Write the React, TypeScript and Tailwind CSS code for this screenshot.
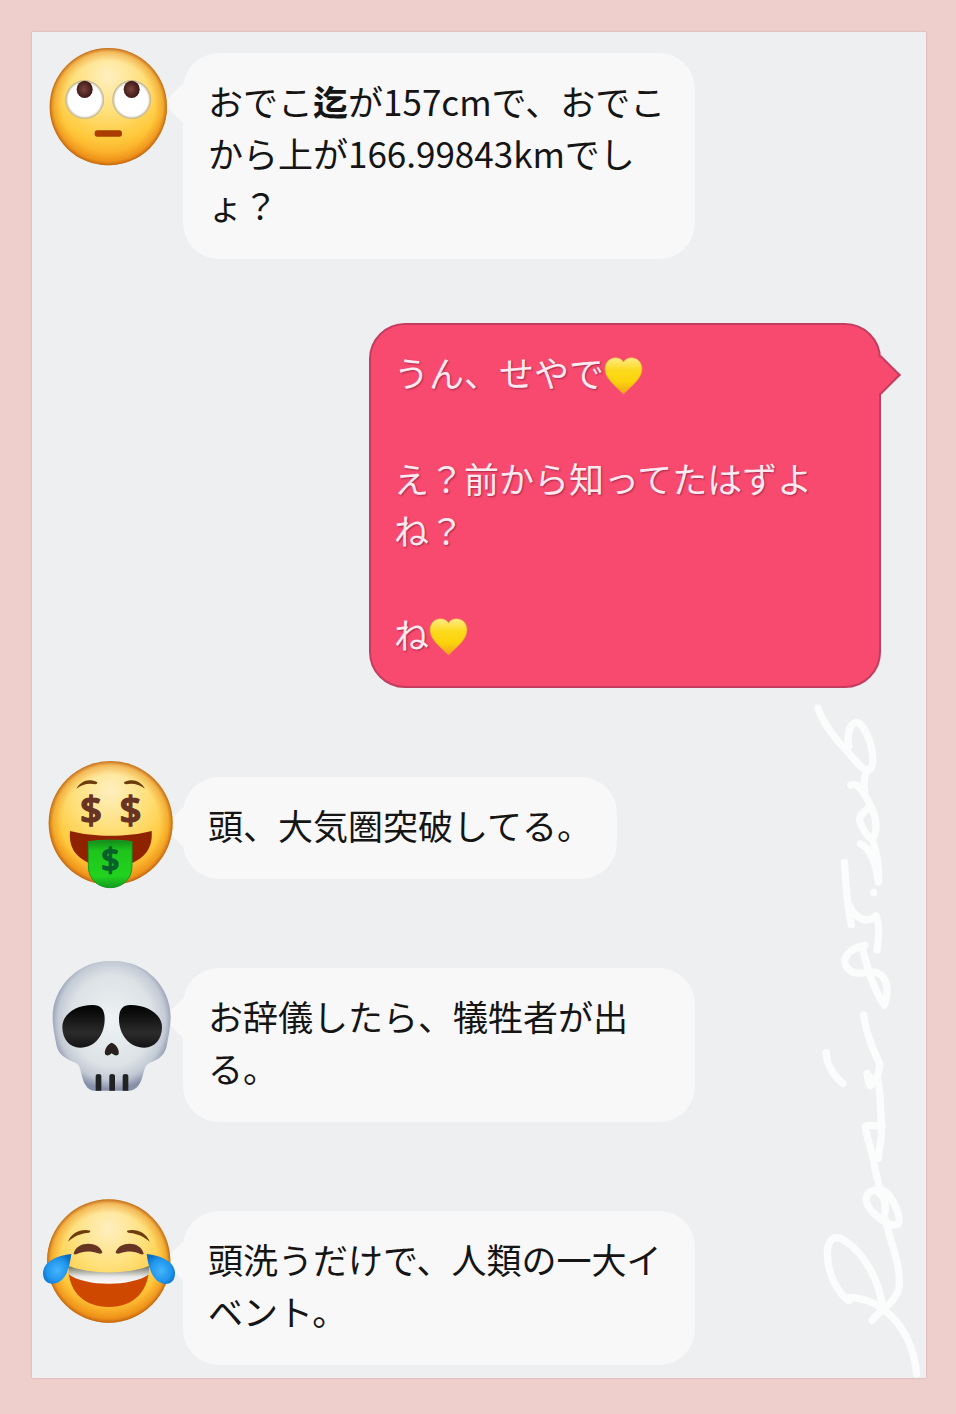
import type { ReactNode } from 'react';

function FaceShade({ id }: { id: string }) {
  return (
    <defs>
      <radialGradient id={`${id}-glow`} cx="50%" cy="24%" r="76%">
        <stop offset="0%" stopColor="#ffefc0" />
        <stop offset="40%" stopColor="#ffe07a" />
        <stop offset="72%" stopColor="#ffc93c" />
        <stop offset="100%" stopColor="#f6991a" />
      </radialGradient>
      <radialGradient id={`${id}-rim`} cx="50%" cy="50%" r="50%">
        <stop offset="78%" stopColor="#e8860f" stopOpacity="0" />
        <stop offset="93%" stopColor="#e07a10" stopOpacity="0.4" />
        <stop offset="100%" stopColor="#b85e14" stopOpacity="0.9" />
      </radialGradient>
    </defs>
  );
}

function Face({ id, cx, cy, r }: { id: string; cx: number; cy: number; r: number }) {
  return (
    <>
      <FaceShade id={id} />
      <circle cx={cx} cy={cy} r={r} fill={`url(#${id}-glow)`} />
      <circle cx={cx} cy={cy} r={r} fill={`url(#${id}-rim)`} />
    </>
  );
}

const avatarClass = 'relative z-10 -mt-4 -mb-8 mr-[7px] h-[130px] w-[136px] shrink-0';

function RollingEyes() {
  return (
    <svg viewBox="30 21 408 390" className={avatarClass} role="img" aria-label="Rolling eyes">
      <defs>
        <radialGradient id="pupil" cx="45%" cy="50%" r="55%">
          <stop offset="0%" stopColor="#7a4640" />
          <stop offset="100%" stopColor="#3a1412" />
        </radialGradient>
        <radialGradient id="eyeball" cx="50%" cy="50%" r="50%">
          <stop offset="84%" stopColor="#ffffff" />
          <stop offset="100%" stopColor="#b9ab86" />
        </radialGradient>
      </defs>
      <Face id="rolling" cx={235} cy={230} r={176} />
      <circle cx="164" cy="209" r="58" fill="url(#eyeball)" />
      <circle cx="305" cy="209" r="58" fill="url(#eyeball)" />
      <ellipse cx="164" cy="178" rx="24" ry="26" fill="url(#pupil)" />
      <ellipse cx="305" cy="178" rx="24" ry="26" fill="url(#pupil)" />
      <rect x="194" y="301" width="82" height="19" rx="8" fill="#ab3d02" />
    </svg>
  );
}

function MoneyMouth() {
  return (
    <svg viewBox="30 48 408 390" className={avatarClass} role="img" aria-label="Money mouth">
      <defs>
        <linearGradient id="bill" x1="0" y1="0" x2="0" y2="1">
          <stop offset="0%" stopColor="#128a1c" />
          <stop offset="22%" stopColor="#1ec41c" />
          <stop offset="75%" stopColor="#22d31e" />
          <stop offset="100%" stopColor="#159a22" />
        </linearGradient>
      </defs>
      <Face id="money" cx={242} cy={234} r={186} />
      <path d="M139 131 C153 108 176 99 202 112 C202 116 200 118 196 118 C174 114 158 118 139 131Z" fill="#6d3c0c" />
      <path d="M345 131 C331 108 308 99 282 112 C282 116 284 118 288 118 C310 114 326 118 345 131Z" fill="#6d3c0c" />
      <g textAnchor="middle" fontWeight="600" fontSize="116" strokeWidth="4" strokeLinejoin="round" className="font-['Open_Sans',sans-serif]">
        <text x="183" y="238" fill="#673423" stroke="#673423">$</text>
        <text x="302" y="238" fill="#673423" stroke="#673423">$</text>
      </g>
      <path d="M120 258 C190 277 294 277 365 258 C370 318 333 363 242 365 C151 363 114 318 120 258Z" fill="#8f2300" />
      <path d="M175 290 C215 284 270 284 306 290 L306 362 C306 450 175 450 175 362Z" fill="url(#bill)" stroke="#159a22" strokeWidth="3" />
      <text x="241" y="380" textAnchor="middle" fontWeight="600" fontSize="96" fill="#08612b" stroke="#08612b" strokeWidth="4" strokeLinejoin="round" className="font-['Open_Sans',sans-serif]">$</text>
    </svg>
  );
}

function Skull() {
  return (
    <svg viewBox="30 21 408 390" overflow="visible" className={avatarClass} role="img" aria-label="Skull">
      <defs>
        <radialGradient id="bone" cx="50%" cy="46%" r="53%">
          <stop offset="0%" stopColor="#eef3f5" />
          <stop offset="66%" stopColor="#dce2e5" />
          <stop offset="86%" stopColor="#c3cad5" />
          <stop offset="100%" stopColor="#8790a8" />
        </radialGradient>
        <linearGradient id="socket" x1="0" y1="0" x2="0" y2="1">
          <stop offset="0%" stopColor="#000000" />
          <stop offset="65%" stopColor="#2b2b2b" />
          <stop offset="100%" stopColor="#141414" />
        </linearGradient>
      </defs>
      <path
        d="M245 48 C345 44 422 124 422 216 C422 246 414 282 410 304 C402 338 378 346 358 354 C338 363 343 396 327 419 C319 431 308 437 294 437 L196 437 C182 437 173 431 166 419 C151 396 156 363 138 354 C116 346 88 334 80 304 C76 280 67 246 68 216 C68 124 148 44 245 48Z"
        fill="url(#bone)"
      />
      <path d="M97 246 C97 208 136 180 188 180 C213 180 224 194 224 222 C224 266 198 308 150 308 C118 308 97 282 97 246Z" fill="url(#socket)" />
      <path d="M396 246 C396 208 352 180 302 180 C277 180 267 194 267 222 C267 266 295 308 343 308 C375 308 396 282 396 246Z" fill="url(#socket)" />
      <path d="M245 293 C258 297 269 314 266 327 C261 335 251 330 245 325 C240 330 230 335 225 327 C222 314 233 297 245 293Z" fill="#28201f" />
      <path d="M197 437 V393 Q197 387 205 387 Q214 387 214 393 V437Z M238 437 V393 Q238 387 246 387 Q255 387 255 393 V437Z M278 437 V393 Q278 387 286 387 Q295 387 295 393 V437Z" fill="#1f2123" />
    </svg>
  );
}

function TearsOfJoy() {
  return (
    <svg viewBox="30 30 408 390" className={avatarClass} role="img" aria-label="Tears of joy">
      <defs>
        <linearGradient id="teeth" x1="0" y1="0" x2="0" y2="1">
          <stop offset="0%" stopColor="#6f6f5c" />
          <stop offset="60%" stopColor="#e9e9e9" />
          <stop offset="100%" stopColor="#ffffff" />
        </linearGradient>
        <radialGradient id="tear" cx="50%" cy="55%" r="60%">
          <stop offset="0%" stopColor="#45b5fb" />
          <stop offset="60%" stopColor="#2196ee" />
          <stop offset="100%" stopColor="#0a6ac0" />
        </radialGradient>
      </defs>
      <Face id="joy" cx={236} cy={228} r={185} />
      <path d="M114 170 C124 143 154 130 181 137 C181 142 178 143 172 144 C149 146 133 154 114 170Z" fill="#6d3c0c" />
      <path d="M359 170 C349 143 319 130 291 137 C291 142 294 143 300 144 C323 146 340 154 359 170Z" fill="#6d3c0c" />
      <path d="M131 206 C140 168 206 167 217 202 C216 207 209 207 204 205 C183 197 159 197 141 207 C136 209 132 209 131 206Z" fill="#673423" />
      <path d="M341 206 C332 168 269 167 257 202 C258 207 265 207 270 205 C291 197 314 197 331 207 C336 209 340 209 341 206Z" fill="#673423" />
      <path d="M116 262 C166 305 306 305 356 262 C350 322 310 366 237 366 C163 366 121 322 116 262Z" fill="#cf4800" />
      <path d="M116 243 C185 269 289 269 357 243 L357 268 C306 306 166 306 116 268Z" fill="url(#teeth)" />
      <path d="M124 207 C85 211 40 228 39 264 C39 284 49 296 68 296 C109 294 119 244 124 207Z" fill="url(#tear)" />
      <path d="M350 207 C389 211 434 228 435 264 C435 284 425 297 406 297 C366 294 355 244 350 207Z" fill="url(#tear)" />
    </svg>
  );
}

function YellowHeart() {
  return (
    <svg viewBox="0 0 40 40" className="mb-1 inline-block size-10 align-middle" role="img" aria-label="Yellow heart">
      <defs>
        <linearGradient id="heart" x1="0" y1="0" x2="0" y2="1">
          <stop offset="0%" stopColor="#ffeb85" />
          <stop offset="35%" stopColor="#fbd91c" />
          <stop offset="65%" stopColor="#fcd40c" />
          <stop offset="100%" stopColor="#f3a11c" />
        </linearGradient>
      </defs>
      <path
        d="M19.5 6 C23 -1 38 0 38 13 C38 22 29 29 19.5 38 C10 29 1 22 1 13 C1 0 16 -1 19.5 6Z"
        fill="url(#heart)"
        stroke="#f2a03a"
        strokeWidth="0.6"
      />
    </svg>
  );
}

function Received({ avatar, children }: { avatar: ReactNode; children: ReactNode }) {
  return (
    <div className="flex items-start pl-2">
      {avatar}
      <div className="relative max-w-[512px] rounded-[36px] bg-[#f8f8f8] px-[25px] pt-[22px] pb-7 text-[#151515]">
        <span className="absolute top-9 -left-3.5 size-7 rotate-45 bg-[#f8f8f8]" />
        <p className="relative">{children}</p>
      </div>
    </div>
  );
}

function Sent({ children }: { children: ReactNode }) {
  return (
    <div className="flex justify-end pr-[45px]">
      <div className="relative w-[512px] rounded-[36px] border-2 border-[#c33d60] bg-[#f84a6f] px-[23px] pt-[21px] pb-[25px] text-[#ffe9f0] [text-shadow:1px_1px_2px_#a52a4c]">
        <span className="absolute top-9 -right-4 size-7 rotate-45 border-t-2 border-r-2 border-[#c33d60] bg-[#f84a6f]" />
        {children}
      </div>
    </div>
  );
}

// Handwritten name running up the right-hand side
function Signature() {
  return (
    <svg
      viewBox="0 0 378 2064"
      className="pointer-events-none absolute right-0 bottom-0 h-[688px] w-[126px]"
      fill="none"
      stroke="#fbfcfc"
      strokeWidth="22"
      strokeLinecap="round"
      strokeLinejoin="round"
      aria-hidden="true"
    >
      <path d="M54 54 C67 94 101 145 142 184 C164 209 184 238 202 240 C222 240 222 200 211 160 C199 121 180 94 167 98 C149 102 139 139 147 168" />
      <path d="M202 240 C191 260 190 280 194 306 M152 285 C174 274 194 312 211 345 C204 362 176 372 178 389 C187 414 201 442 216 446 C234 430 231 383 211 346" />
      <path d="M181 461 C210 471 229 526 235 576 M216 446 C231 486 238 535 235 576" />
      <path d="M221 607 L221 608" />
      <path d="M133 517 C138 570 137 625 154 704 M148 646 C163 680 194 706 228 678 C240 700 237 740 231 780" />
      <path d="M194 766 C151 774 117 807 144 836 C170 865 212 836 230 848 C265 861 267 905 253 946 C216 890 199 825 188 776" />
      <path d="M191 975 C198 1030 222 1089 238 1118 C243 1140 230 1148 233 1164 C243 1210 239 1250 246 1310" />
      <path d="M79 1087 C78 1125 103 1160 129 1180" />
      <path d="M201 1150 C203 1170 206 1180 211 1187 L222 1178 C217 1164 209 1160 203 1160" />
      <path d="M246 1310 C230 1308 210 1302 196 1309 C199 1343 215 1375 219 1405 L235 1405 C238 1370 246 1345 244 1316 M222 1420 C226 1448 235 1472 238 1494" />
      <path d="M238 1500 C214 1497 195 1510 199 1535 C206 1564 267 1617 294 1602 C309 1585 277 1525 260 1508 C234 1489 219 1500 238 1509 C267 1538 254 1567 250 1590" />
      <path d="M256 1590 C277 1675 300 1720 298 1785 C290 1840 247 1850 216 1892" />
      <path d="M147 1832 C116 1811 82 1755 82 1690 C84 1640 108 1634 137 1654 C195 1695 234 1765 248 1848" />
      <path d="M147 1822 C253 1825 337 1920 350 2052" />
    </svg>
  );
}

export default function App() {
  return (
    <div className="flex min-h-screen flex-col bg-[#eecfcc] pt-8 pr-[30px] pb-9 pl-8">
      <main className="relative flex-1 bg-[#edeff1] pt-[21px] pb-[13px] font-['Noto_Sans_CJK_JP',sans-serif] text-[35px] leading-[52px] shadow-[0_0_2px_#c9a9a9]" lang="ja">
        <Signature />
        <div className="flex flex-col gap-[89px]">
          <div className="flex flex-col gap-16">
            <Received avatar={<RollingEyes />}>
              おでこ<b>迄</b>が157cmで、おでこから上が166.99843kmでしょ？
            </Received>
            <Sent>
              <p>
                うん、せやで
                <YellowHeart />
              </p>
              <p className="mt-[52px]">え？前から知ってたはずよね？</p>
              <p className="mt-[52px]">
                ね
                <YellowHeart />
              </p>
            </Sent>
          </div>
          <Received avatar={<MoneyMouth />}>頭、大気圏突破してる。</Received>
          <Received avatar={<Skull />}>お辞儀したら、犠牲者が出る。</Received>
          <Received avatar={<TearsOfJoy />}>頭洗うだけで、人類の一大イベント。</Received>
        </div>
      </main>
    </div>
  );
}
